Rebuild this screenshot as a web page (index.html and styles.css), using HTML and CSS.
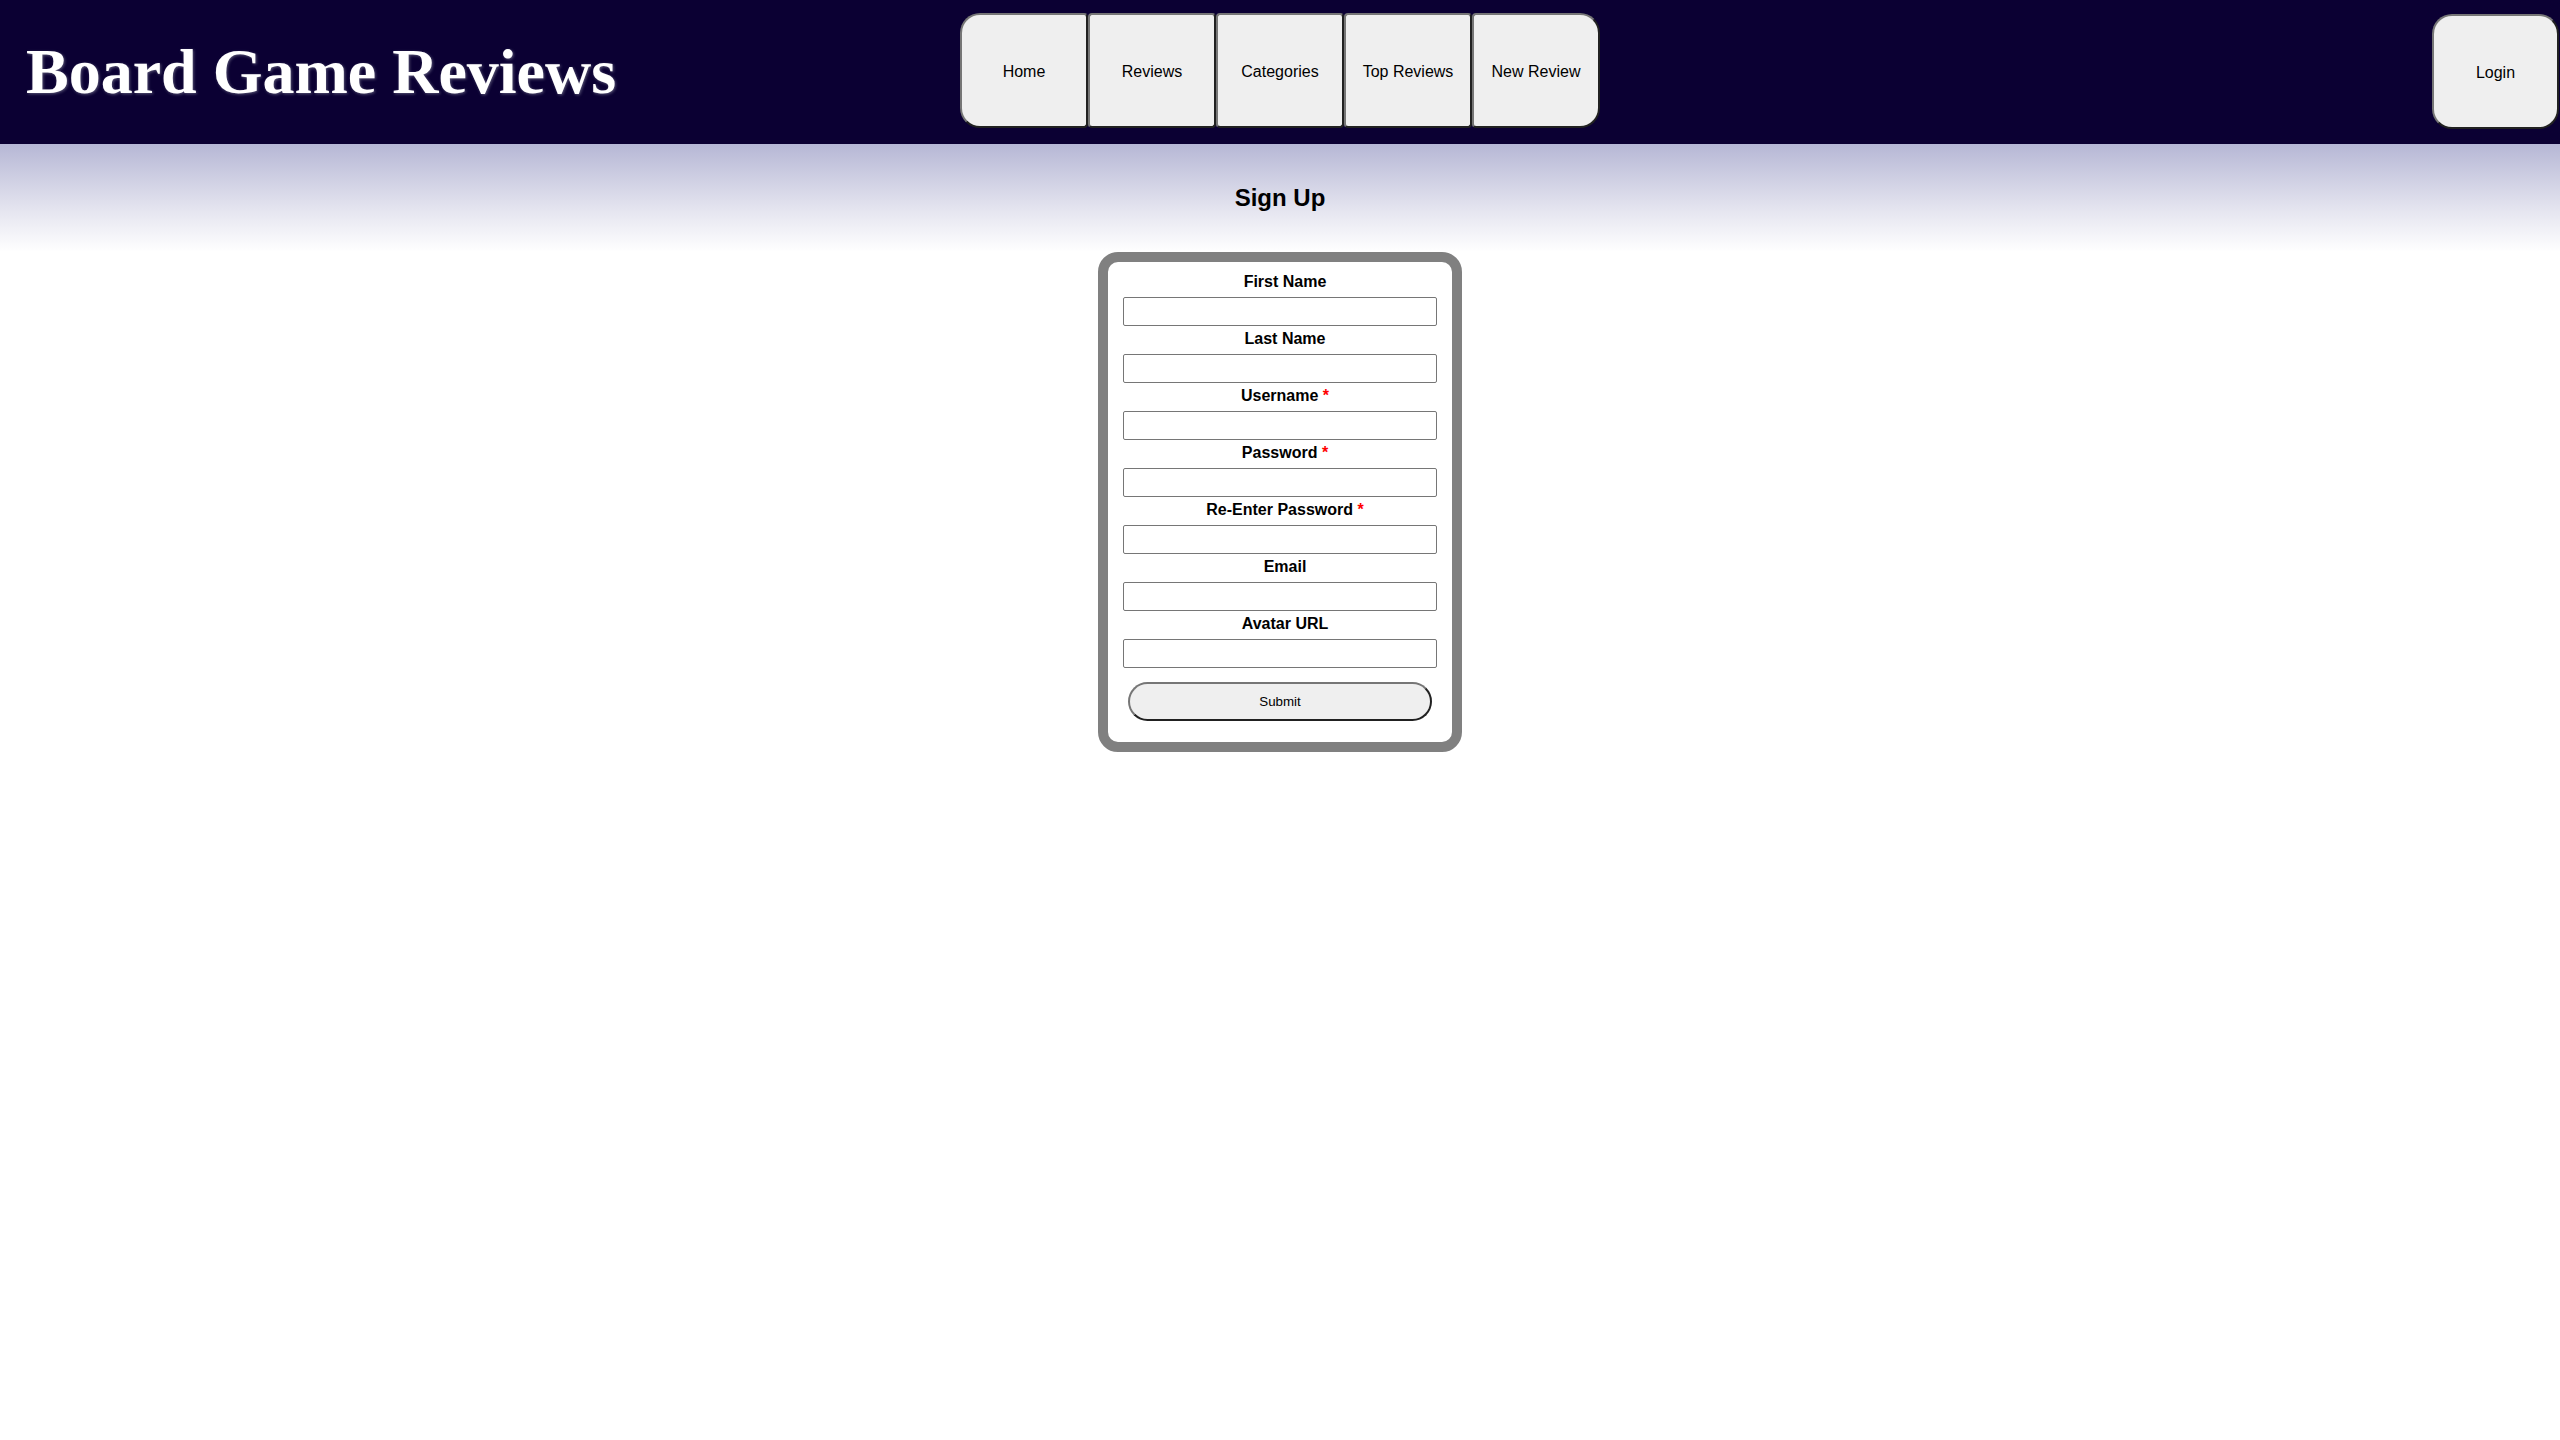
FILE: index.html
```html
<!DOCTYPE html>
<html lang="en">
<head>
<meta charset="utf-8">
<title>Board Game Reviews - Sign Up</title>
<link rel="stylesheet" href="styles.css">
</head>
<body>
<header class="site-header">
  <h1 class="site-title">Board Game Reviews</h1>
  <nav class="main-nav">
    <button class="nav-btn">Home</button>
    <button class="nav-btn">Reviews</button>
    <button class="nav-btn">Categories</button>
    <button class="nav-btn">Top Reviews</button>
    <button class="nav-btn">New Review</button>
  </nav>
  <div class="account">
    <button class="login-btn">Login</button>
  </div>
</header>
<section class="page-banner">
  <h2 class="page-title">Sign Up</h2>
</section>
<main class="content">
  <form class="signup-form">
    <label class="field-label">First Name</label>
    <input class="field-input" type="text">
    <label class="field-label">Last Name</label>
    <input class="field-input" type="text">
    <label class="field-label">Username <span class="req">*</span></label>
    <input class="field-input" type="text">
    <label class="field-label">Password <span class="req">*</span></label>
    <input class="field-input" type="password">
    <label class="field-label">Re-Enter Password <span class="req">*</span></label>
    <input class="field-input" type="password">
    <label class="field-label">Email</label>
    <input class="field-input" type="text">
    <label class="field-label">Avatar URL</label>
    <input class="field-input" type="text">
    <button class="submit-btn" type="button">Submit</button>
  </form>
</main>
</body>
</html>
```

FILE: styles.css
```css
html, body {
  margin: 0;
  padding: 0;
  background: #ffffff;
  font-family: "Liberation Sans", Arial, sans-serif;
}

.site-header {
  height: 144px;
  background: #0b0033;
  display: grid;
  grid-template-columns: 1fr auto 1fr;
  align-items: start;
}

.site-title {
  margin: 0;
  align-self: center;
  padding-left: 26px;
  font-family: "Liberation Serif", "Times New Roman", serif;
  font-size: 64px;
  font-weight: bold;
  color: #ffffff;
  white-space: nowrap;
  text-shadow: 1px 1px 3px rgba(140, 140, 160, 0.6);
}

.main-nav {
  display: flex;
  margin-top: 13px;
}

.nav-btn,
.login-btn {
  width: 128px;
  height: 115px;
  box-sizing: border-box;
  background: #efefef;
  border: 2px outset #767676;
  border-radius: 4px;
  font-family: "Liberation Sans", Arial, sans-serif;
  font-size: 16px;
  color: #000000;
  padding: 2px 0 0;
}

.nav-btn:first-child {
  border-radius: 20px 4px 4px 20px;
}

.nav-btn:last-child {
  border-radius: 4px 20px 20px 4px;
}

.account {
  display: flex;
  justify-content: flex-end;
  margin-top: 14px;
}

.login-btn {
  width: 127px;
  margin-right: 1px;
  border-radius: 20px;
}

.page-banner {
  padding: 20px 0;
  background: linear-gradient(to bottom, #b6b7d5 0%, #e4e4ef 60%, #ffffff 100%);
  text-align: center;
}

.page-title {
  margin: 20px 0;
  font-size: 24px;
  font-weight: bold;
  color: #000000;
}

.content {
  display: flex;
  justify-content: center;
}

.signup-form {
  width: 364px;
  box-sizing: border-box;
  border: 10px solid #808080;
  border-radius: 20px;
  padding: 11px 15px 21px;
  display: flex;
  flex-direction: column;
}

.field-label {
  display: block;
  text-align: center;
  padding-left: 10px;
  font-size: 16px;
  line-height: 18px;
  font-weight: bold;
  color: #000000;
  margin-bottom: 6px;
}

.req {
  color: #ff0000;
}

.field-input {
  display: block;
  width: 100%;
  height: 29px;
  box-sizing: border-box;
  margin: 0 0 4px;
  border: 1px solid #767676;
  border-radius: 2px;
  background: #ffffff;
  font-family: "Liberation Sans", Arial, sans-serif;
}

.submit-btn {
  display: block;
  width: 304px;
  height: 39px;
  margin: 10px auto 0;
  box-sizing: border-box;
  background: #efefef;
  border: 2px outset #767676;
  border-radius: 20px;
  font-family: "Liberation Sans", Arial, sans-serif;
  font-size: 13.333px;
  color: #000000;
}
```
